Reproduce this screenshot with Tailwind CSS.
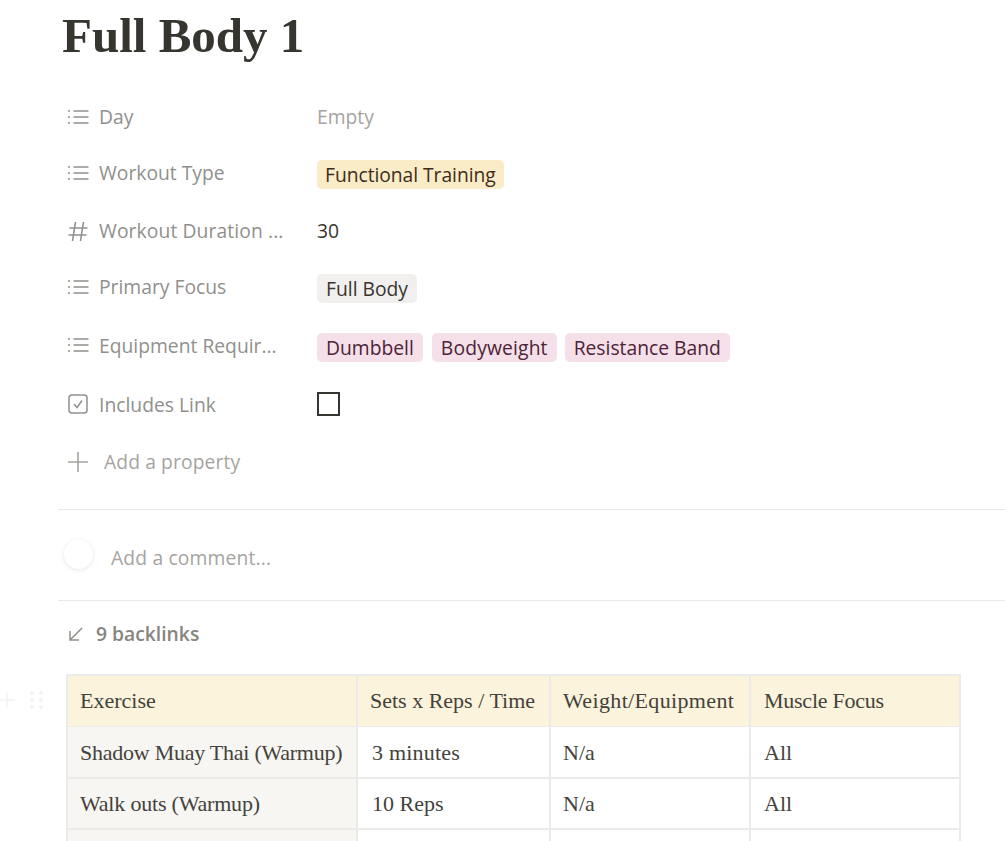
<!DOCTYPE html>
<html><head><meta charset="utf-8"><script src="https://cdn.jsdelivr.net/npm/@tailwindcss/browser@4"></script></head>
<body class="bg-white">
<div class="relative w-[1005px] h-[841px] overflow-hidden bg-white font-['Open_Sans','Noto_Sans',sans-serif] text-[#37352f]">
  <div class="pl-[58px]">
    <h1 class="h-[89px] pl-1 pt-[5px] font-['Liberation_Serif',serif] font-bold text-[49px] leading-[62px] text-[#37352f]">Full Body 1</h1>

    <div class="flex flex-col text-[19.3px] text-[#91908c]">
      <div class="flex items-center h-[56px] pl-[9px]">
        <svg class="w-[22px] h-[22px]" viewBox="0 0 22 22" fill="none" stroke="#91908c" stroke-width="1.4"><path d="M6.5 5h15M6.5 11h15M6.5 17h15M1 5h2M1 11h2M1 17h2"/></svg>
        <span class="ml-[10px] w-[218px]">Day</span><span class="text-[#a5a4a0]">Empty</span>
      </div>
      <div class="flex items-center h-[56px] pl-[9px]">
        <svg class="w-[22px] h-[22px]" viewBox="0 0 22 22" fill="none" stroke="#91908c" stroke-width="1.4"><path d="M6.5 5h15M6.5 11h15M6.5 17h15M1 5h2M1 11h2M1 17h2"/></svg>
        <span class="ml-[10px] w-[218px]">Workout Type</span><span class="mt-[3px] h-[29px] px-[8px] rounded-[5px] bg-[#fbecc8] text-[#402c1b] leading-[30px] tracking-[-0.05px]">Functional Training</span>
      </div>
      <div class="flex items-center h-[59px] pl-[9px]">
        <svg class="w-[22px] h-[22px]" viewBox="0 0 22 22" fill="none" stroke="#91908c" stroke-width="1.6"><path d="M8.5 2 5.5 21M16.5 2l-3 19M2.5 8h18M1.5 15h18"/></svg>
        <span class="ml-[10px] w-[218px] mt-[2px] whitespace-nowrap tracking-[0.1px]">Workout Duration ...</span><span class="text-[#37352f] mt-[2px]">30</span>
      </div>
      <div class="flex items-center h-[55px] pl-[9px]">
        <svg class="w-[22px] h-[22px] -mt-[1px]" viewBox="0 0 22 22" fill="none" stroke="#91908c" stroke-width="1.4"><path d="M6.5 5h15M6.5 11h15M6.5 17h15M1 5h2M1 11h2M1 17h2"/></svg>
        <span class="ml-[10px] w-[218px] -mt-[1px]">Primary Focus</span><span class="mt-[2px] h-[29px] px-[9px] rounded-[5px] bg-[#f1f0ef] text-[#37352f] leading-[30px]">Full Body</span>
      </div>
      <div class="flex items-center h-[60px] pl-[9px]">
        <svg class="w-[22px] h-[22px]" viewBox="0 0 22 22" fill="none" stroke="#91908c" stroke-width="1.4"><path d="M6.5 5h15M6.5 11h15M6.5 17h15M1 5h2M1 11h2M1 17h2"/></svg>
        <span class="ml-[10px] w-[218px] mt-[2px] whitespace-nowrap">Equipment Requir...</span>
        <div class="flex gap-[9px] mt-[5px] text-[#4c2337]">
          <span class="h-[29px] px-[9px] rounded-[5px] bg-[#f5e0e9] leading-[30px]">Dumbbell</span>
          <span class="h-[29px] px-[9px] rounded-[5px] bg-[#f5e0e9] leading-[30px] tracking-[0.15px]">Bodyweight</span>
          <span class="h-[29px] px-[9px] rounded-[5px] bg-[#f5e0e9] leading-[30px] -ml-[1px]">Resistance Band</span>
        </div>
      </div>
      <div class="flex items-center h-[58px] pl-[9px]">
        <svg class="w-[22px] h-[22px]" viewBox="0 0 22 22" fill="none" stroke="#91908c" stroke-width="1.5"><rect x="2" y="2" width="18" height="18" rx="3"/><path d="m7 11 3 3.5 5-7"/></svg>
        <span class="ml-[10px] w-[218px] mt-[2px]">Includes Link</span><span class="w-[23px] h-[24px] border-[2px] border-[#37352f] block"></span>
      </div>
      <div class="flex items-center h-[57px] pl-[9px] text-[#a5a4a0]">
        <svg class="w-[22px] h-[22px]" viewBox="0 0 22 22" fill="none" stroke="#a5a4a0" stroke-width="1.6"><path d="M11 1v20M1 11h20"/></svg>
        <span class="ml-[15px] mt-[2px] tracking-[0.1px]">Add a property</span>
      </div>
    </div>

    <div class="mt-[19px] h-[1px] bg-[#e9e9e7]"></div>
    <div class="flex items-center h-[90px] pl-[6px]">
      <span class="w-[29px] h-[29px] rounded-full bg-white shadow-[0_1px_5px_rgba(15,15,15,0.1)] -mt-[1px]"></span>
      <span class="ml-[18px] mt-[6px] text-[19.3px] text-[#a5a4a0] tracking-[0.15px]">Add a comment...</span>
    </div>
    <div class="h-[1px] bg-[#e9e9e7]"></div>
    <div class="flex items-center h-[66px] pl-[10px] text-[19.3px] font-semibold text-[#86857f]">
      <svg class="w-[16px] h-[16px]" viewBox="0 0 16 16" fill="none" stroke="#91908c" stroke-width="1.5"><path d="M14 2 2.5 13.5M2 5v9h9"/></svg>
      <span class="ml-[12px]">9 backlinks</span>
    </div>
  </div>

  <div class="pl-[66px] mt-[7px] font-['Liberation_Serif',serif] text-[22px] text-[#44423c]">
    <div class="w-[895px] border-[2px] border-b-0 border-[#ebebe9] grid grid-cols-[290px_193px_200px_1fr]">
      <div class="h-[51px] flex items-center pl-[12px] pb-[2px] bg-[#fbf3db] border-r-[2px] border-b border-[#ebebe9]">Exercise</div>
      <div class="h-[51px] flex items-center pl-[12px] pb-[2px] bg-[#fbf3db] border-r-[2px] border-b border-[#ebebe9] whitespace-nowrap">Sets x Reps / Time</div>
      <div class="h-[51px] flex items-center pl-[12px] pb-[2px] tracking-[0.35px] bg-[#fbf3db] border-r-[2px] border-b border-[#ebebe9] whitespace-nowrap">Weight/Equipment</div>
      <div class="h-[51px] flex items-center pl-[13px] pb-[2px] tracking-[-0.25px] bg-[#fbf3db] border-b border-[#ebebe9]">Muscle Focus</div>

      <div class="h-[52px] flex items-center pl-[12px] tracking-[-0.25px] bg-[#f7f6f3] border-r-[2px] border-b-[2px] border-[#ebebe9] whitespace-nowrap">Shadow Muay Thai (Warmup)</div>
      <div class="h-[52px] flex items-center pl-[14px] tracking-[0.2px] border-r-[2px] border-b-[2px] border-[#ebebe9]">3 minutes</div>
      <div class="h-[52px] flex items-center pl-[12px] border-r-[2px] border-b-[2px] border-[#ebebe9]">N/a</div>
      <div class="h-[52px] flex items-center pl-[13px] border-b-[2px] border-[#ebebe9]">All</div>

      <div class="h-[51px] flex items-center pl-[12px] tracking-[-0.2px] bg-[#f7f6f3] border-r-[2px] border-b-[2px] border-[#ebebe9]">Walk outs (Warmup)</div>
      <div class="h-[51px] flex items-center pl-[14px] border-r-[2px] border-b-[2px] border-[#ebebe9]">10 Reps</div>
      <div class="h-[51px] flex items-center pl-[12px] border-r-[2px] border-b-[2px] border-[#ebebe9]">N/a</div>
      <div class="h-[51px] flex items-center pl-[13px] border-b-[2px] border-[#ebebe9]">All</div>

      <div class="h-[30px] bg-[#f7f6f3] border-r-[2px] border-[#ebebe9]"></div>
      <div class="h-[30px] border-r-[2px] border-[#ebebe9]"></div>
      <div class="h-[30px] border-r-[2px] border-[#ebebe9]"></div>
      <div class="h-[30px]"></div>
    </div>
  </div>

  <div class="absolute left-0 top-[689px] flex items-center gap-[13px]">
    <svg class="w-[16px] h-[22px]" viewBox="0 0 16 22" fill="none" stroke="#f4f4f3" stroke-width="1.5"><path d="M7 3v16M0 11h15"/></svg>
    <svg class="w-[16px] h-[22px]" viewBox="0 0 16 22" fill="#f4f4f3"><circle cx="3" cy="4" r="2"/><circle cx="12" cy="4" r="2"/><circle cx="3" cy="11" r="2"/><circle cx="12" cy="11" r="2"/><circle cx="3" cy="18" r="2"/><circle cx="12" cy="18" r="2"/></svg>
  </div>
</div>
</body></html>
